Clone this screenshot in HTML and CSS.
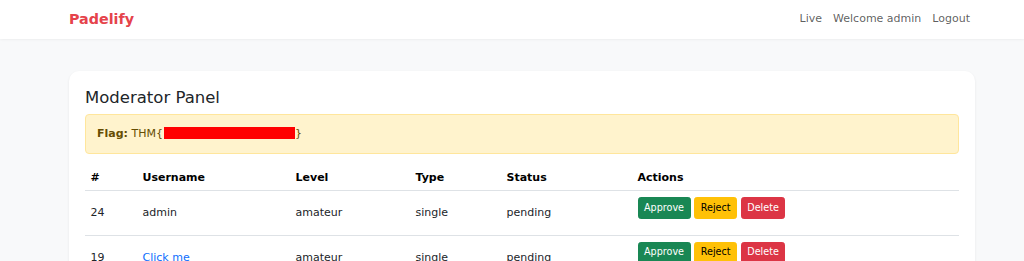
FILE: index.html
```html
<!DOCTYPE html>
<html lang="en">
<head>
<meta charset="utf-8">
<title>Padelify - Moderator Panel</title>
<link rel="stylesheet" href="styles.css">
</head>
<body>
<nav class="navbar">
  <div class="nav-inner">
    <a class="brand" href="#">Padelify</a>
    <div class="nav-links">
      <a class="nav-link" href="#">Live</a>
      <span class="nav-link">Welcome admin</span>
      <a class="nav-link" href="#">Logout</a>
    </div>
  </div>
</nav>
<main class="page">
  <section class="card">
    <h4 class="card-title">Moderator Panel</h4>
    <div class="alert"><strong>Flag:</strong> THM{<span class="redact"></span>}</div>
    <table class="table">
      <colgroup>
        <col class="c-id"><col class="c-user"><col class="c-level"><col class="c-type"><col class="c-status"><col class="c-actions">
      </colgroup>
      <thead>
        <tr><th>#</th><th>Username</th><th>Level</th><th>Type</th><th>Status</th><th>Actions</th></tr>
      </thead>
      <tbody>
        <tr>
          <td>24</td><td>admin</td><td>amateur</td><td>single</td><td>pending</td>
          <td class="actions"><div class="btns"><button class="btn btn-green">Approve</button><button class="btn btn-yellow">Reject</button><button class="btn btn-red">Delete</button></div></td>
        </tr>
        <tr>
          <td>19</td><td><a class="link" href="#">Click me</a></td><td>amateur</td><td>single</td><td>pending</td>
          <td class="actions"><div class="btns"><button class="btn btn-green">Approve</button><button class="btn btn-yellow">Reject</button><button class="btn btn-red">Delete</button></div></td>
        </tr>
      </tbody>
    </table>
  </section>
</main>
</body>
</html>
```
FILE: styles.css
```css
* { box-sizing: border-box; }
html, body { margin: 0; padding: 0; }
body {
  background: #f8f9fa;
  font-family: "DejaVu Sans", sans-serif;
  font-size: 11px;
  line-height: 1.5;
  color: #212529;
}
.navbar {
  background: #fff;
  height: 38.5px;
  box-shadow: 0 1.4px 2.8px rgba(0,0,0,0.075);
  position: relative;
  z-index: 1;
}
.nav-inner {
  margin-left: 69px;
  width: 906.5px;
  height: 100%;
  display: flex;
  align-items: center;
  justify-content: space-between;
}
.brand {
  color: #e5434b;
  font-weight: bold;
  font-size: 14.3px;
  text-decoration: none;
}
.nav-links { display: flex; }
.nav-link {
  color: rgba(0,0,0,0.65);
  text-decoration: none;
  padding: 0 5.5px;
}
.page { padding-top: 32.5px; }
.card {
  margin-left: 68.5px;
  width: 906.5px;
  background: #fff;
  border-radius: 10px;
  box-shadow: 0 1.4px 2.8px rgba(0,0,0,0.075);
  padding: 16.5px;
}
.card-title {
  margin: 0 0 6.5px;
  font-size: 16.5px;
  font-weight: 500;
  line-height: 1.2;
  color: #212529;
}
.alert {
  background: #fff3cd;
  border: 1px solid #ffe69c;
  color: #664d03;
  border-radius: 4px;
  padding: 11px;
  margin-bottom: 10.5px;
  height: 40px;
}
.redact {
  display: inline-block;
  width: 131px;
  height: 12.7px;
  margin-left: 1px;
  background: #ff0000;
  vertical-align: -2.5px;
}
.table {
  width: 100%;
  border-collapse: collapse;
  table-layout: fixed;
}
.c-id { width: 52px; }
.c-user { width: 153px; }
.c-level { width: 120px; }
.c-type { width: 91px; }
.c-status { width: 131px; }
.c-actions { width: 327px; }
.table th, .table td {
  padding: 5.5px;
  text-align: left;
  border-bottom: 1px solid #dee2e6;
  vertical-align: middle;
}
.table th {
  padding: 6px 5.5px 3.5px;
  font-weight: bold;
  color: #000;
}
.link { color: #0d6efd; text-decoration: none; }
.actions { vertical-align: top; }
.btns {
  display: flex;
  gap: 3.75px;
  margin-bottom: 11px;
}
.btn {
  font-family: "DejaVu Sans", sans-serif;
  font-size: 9.625px;
  line-height: 1.5;
  padding: 2.75px 5.5px;
  border: 1px solid transparent;
  border-radius: 2.75px;
  cursor: pointer;
}
.btn-green { background: #198754; border-color: #198754; color: #fff; }
.btn-yellow { background: #ffc107; border-color: #ffc107; color: #000; }
.btn-red { background: #dc3545; border-color: #dc3545; color: #fff; }
```
